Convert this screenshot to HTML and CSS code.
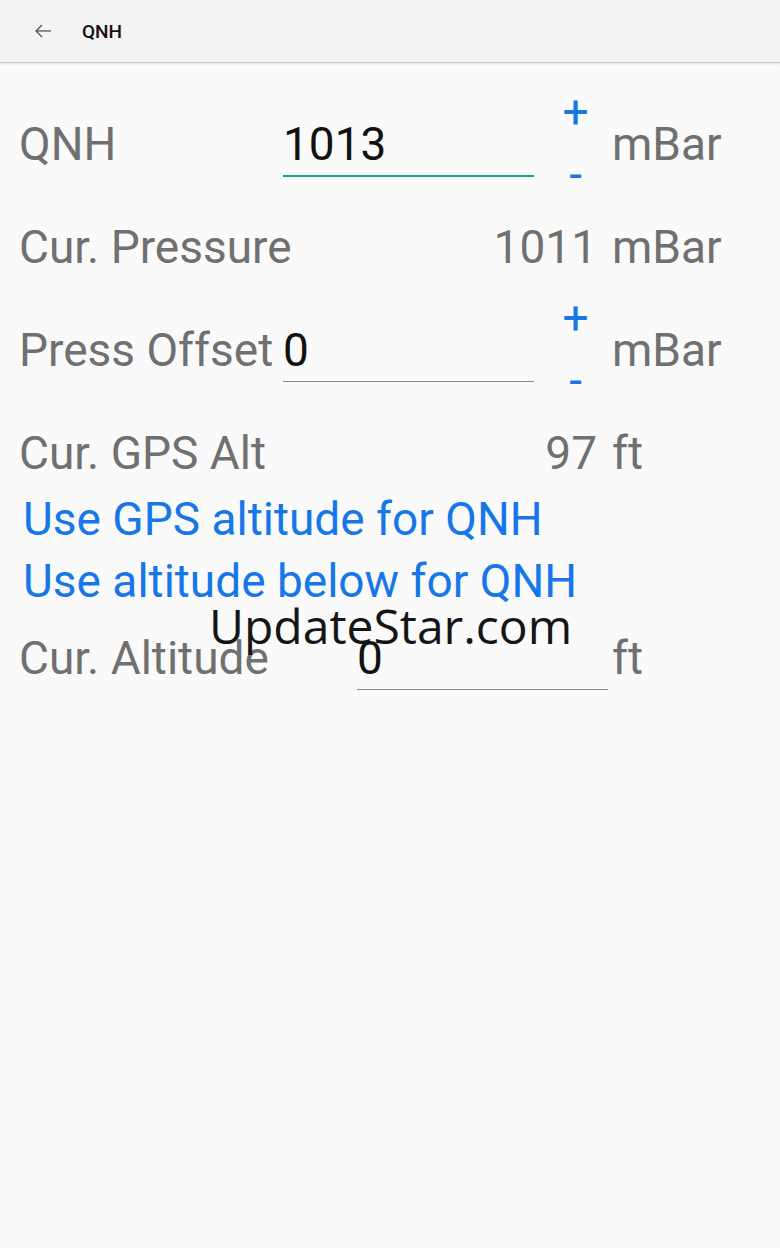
FILE: index.html
```html
<!DOCTYPE html>
<html lang="en">
<head>
    <meta charset="UTF-8">
    <meta name="viewport" content="width=device-width, initial-scale=1.0">
    <title>QNH</title>
    <link rel="stylesheet" href="styles.css">
</head>
<body>
<header class="appbar">
    <button class="back" aria-label="Back">
        <svg width="16" height="14" viewBox="0 0 16 14" fill="none" stroke="#555" stroke-width="1.3">
            <path d="M16 7H1.2"/>
            <path d="M7 1L1 7l6 6"/>
        </svg>
    </button>
    <span class="title">QNH</span>
</header>

<main class="form">
    <!-- QNH setting -->
    <div class="row">
        <span class="label">QNH</span>
        <input class="field field-active" type="text" value="1013">
        <div class="stepper">
            <button>+</button>
            <button>-</button>
        </div>
        <span class="unit">mBar</span>
    </div>

    <div class="row">
        <span class="label">Cur. Pressure</span>
        <span class="value">1011</span>
        <span class="unit">mBar</span>
    </div>

    <div class="row">
        <span class="label">Press Offset</span>
        <input class="field" type="text" value="0">
        <div class="stepper">
            <button>+</button>
            <button>-</button>
        </div>
        <span class="unit">mBar</span>
    </div>

    <div class="row row-short">
        <span class="label">Cur. GPS Alt</span>
        <span class="value">97</span>
        <span class="unit">ft</span>
    </div>

    <div class="links">
        <a href="#">Use GPS altitude for QNH</a>
        <a href="#">Use altitude below for QNH</a>
    </div>

    <div class="row row-alt">
        <span class="label">Cur. Altitude</span>
        <input class="field field-right" type="text" value="0">
        <span class="unit">ft</span>
    </div>
</main>

<div class="watermark">UpdateStar.com</div>
</body>
</html>
```

FILE: styles.css
```css
body {
    margin: 0;
    background-color: #fafafa;
    font-family: Roboto, 'Liberation Sans', sans-serif;
    position: relative;
    min-height: 1248px;
}

.appbar {
    height: 62px;
    display: flex;
    align-items: center;
    background-color: #f3f3f3;
    border-bottom: 1px solid #c9c9c9;
    box-shadow: 0 1px 2px rgba(0, 0, 0, 0.1);
}

.back {
    border: 0;
    background: none;
    padding: 0;
    margin-left: 35px;
    width: 16px;
    height: 14px;
    display: flex;
}

.title {
    margin-left: 31px;
    font-size: 19px;
    font-weight: 500;
    color: #111;
}

.form {
    padding: 30px 0 0 19px;
    font-size: 46px;
    line-height: 54px;
}

.row {
    display: grid;
    grid-template-columns: 264px 251px 78px auto;
    align-items: start;
    height: 103px;
    padding-top: 24px;
    box-sizing: border-box;
}

.row-short {
    height: 86px;
}

.row-alt {
    padding-top: 19px;
}

.label,
.value {
    color: #707070;
    white-space: nowrap;
}

.unit {
    color: #707070;
    grid-column: 4;
}

.value {
    grid-column: 2 / 4;
    justify-self: end;
    margin-right: 15px;
}

.field {
    width: 251px;
    height: 54px;
    margin: 0;
    padding: 0 0 4px;
    box-sizing: content-box;
    border: 0;
    border-bottom: 1px solid #8a8a8a;
    background: transparent;
    font: inherit;
    color: #111;
    outline: none;
}

.field-active {
    border-bottom: 2px solid #1f9e8f;
}

.field-right {
    grid-column: 2 / 4;
    justify-self: end;
    margin-right: 4px;
}

.stepper {
    display: flex;
    flex-direction: column;
    gap: 8px;
    margin-top: -32px;
    padding-left: 5px;
}

.stepper button {
    border: 0;
    background: none;
    padding: 0;
    font: inherit;
    line-height: 54px;
    color: #1677e8;
}

.links {
    display: flex;
    flex-direction: column;
    align-items: flex-start;
    padding-left: 4px;
    line-height: 62px;
}

.links a {
    color: #1677e8;
    text-decoration: none;
}

.watermark {
    position: absolute;
    left: 209px;
    top: 602px;
    font-family: 'Open Sans', sans-serif;
    font-size: 48px;
    line-height: 48px;
    color: #151515;
}
```
